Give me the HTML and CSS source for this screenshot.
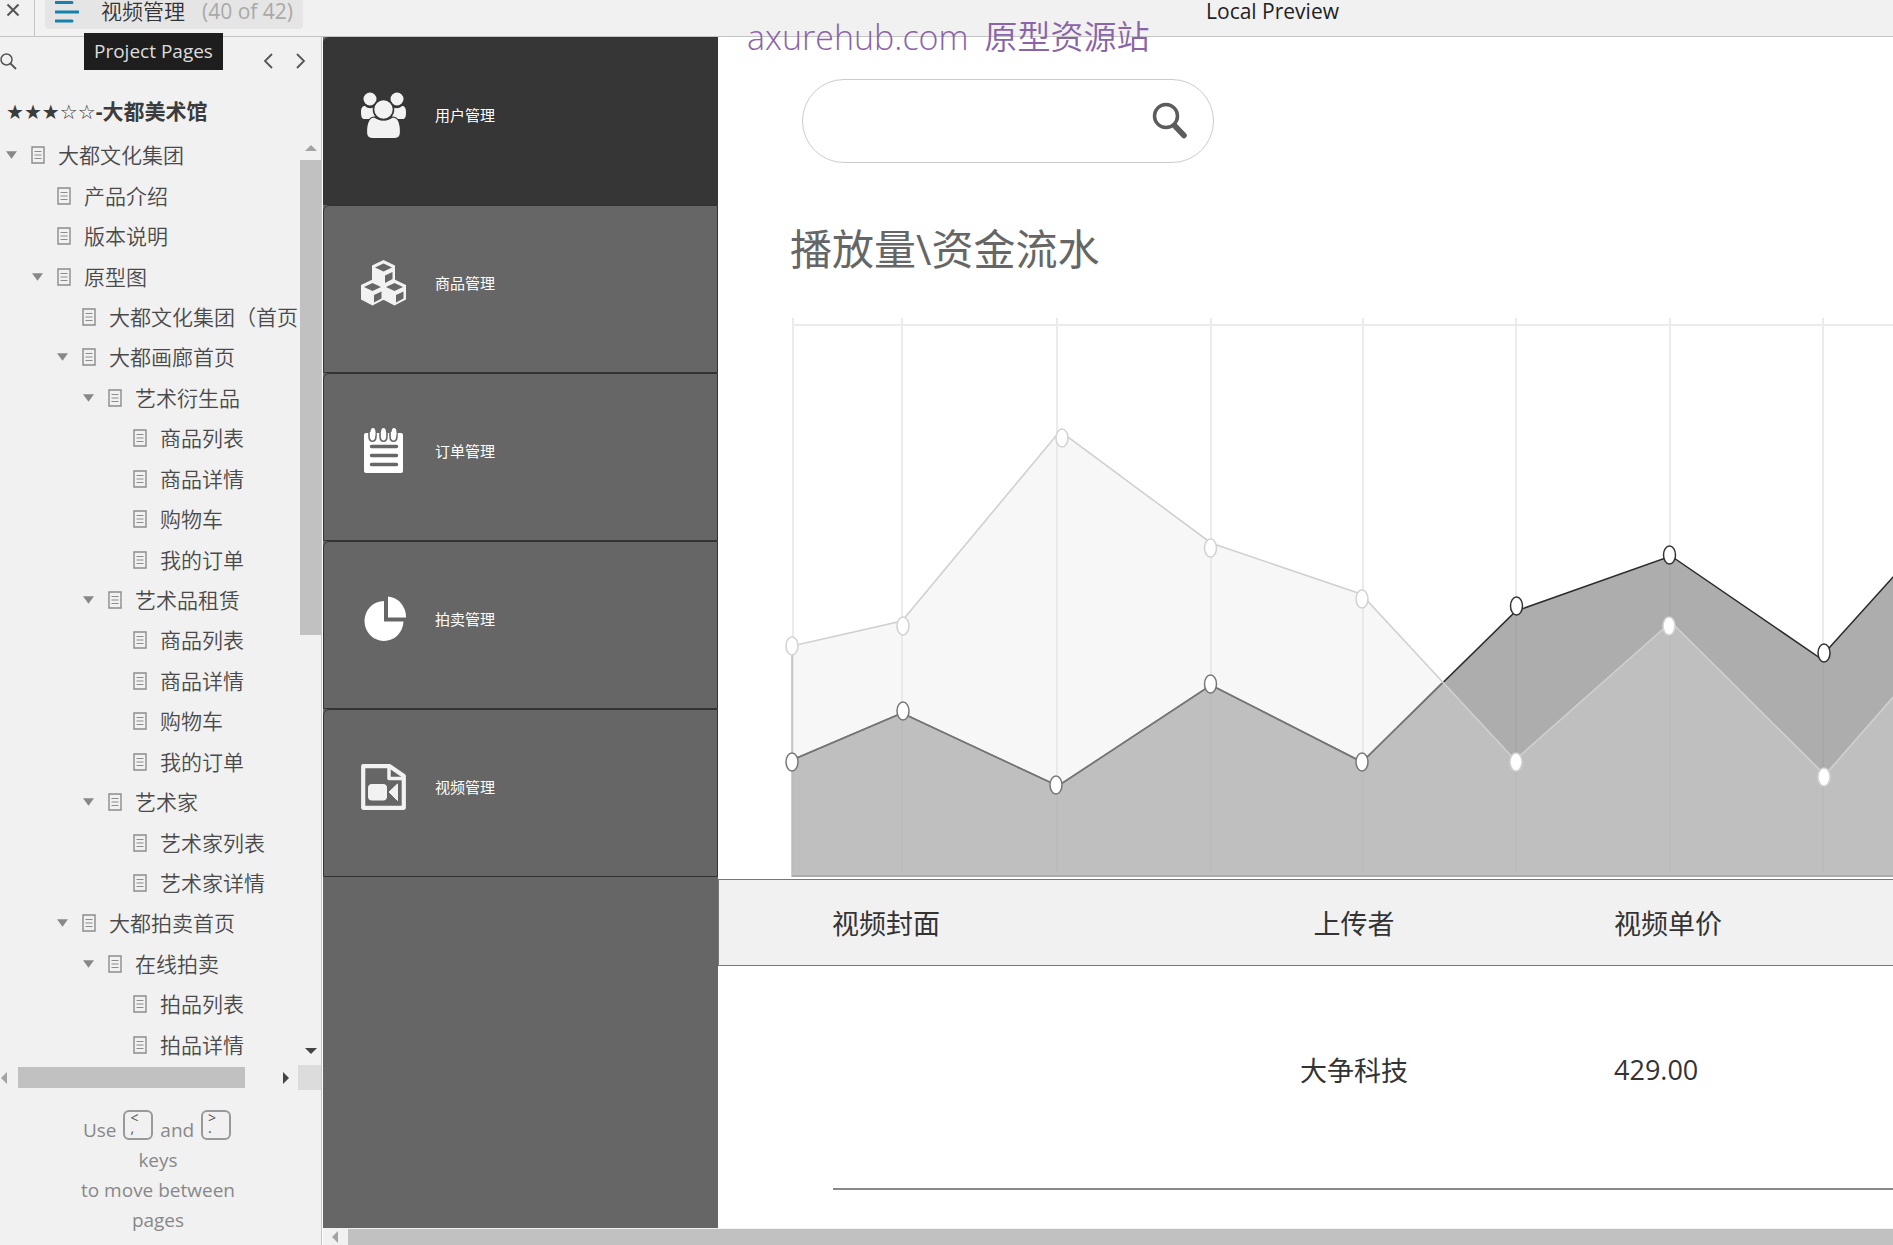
FILE: index.html
```html
<!DOCTYPE html>
<html lang="zh-CN">
<head>
<meta charset="utf-8">
<title>视频管理</title>
<link rel="stylesheet" href="styles.css">
</head>
<body>
<svg width="0" height="0" class="defs" aria-hidden="true">
  <symbol id="page" viewBox="0 0 14 18">
    <path d="M1 1h12v16H1z" fill="none" stroke="#8c8c8c" stroke-width="1.4"/>
    <path d="M3.5 5.5h7M3.5 9h7M3.5 12.500h7" stroke="#8c8c8c" stroke-width="1.2"/>
  </symbol>
  <symbol id="tri" viewBox="0 0 12 8"><path d="M0 0h12L6 8z" fill="currentColor"/></symbol>
</svg>

<header class="topbar">
  <button class="close" aria-label="Close"><svg width="14" height="14" viewBox="0 0 14 14"><path d="M1.500 1.500l11 11M12.500 1.500l-11 11" stroke="#555" stroke-width="2"/></svg></button>
  <button class="pages-toggle">
    <svg width="24" height="22" viewBox="0 0 24 22"><path d="M1 1.500h16M1 11h22M1 20h16" stroke="#1482ad" stroke-width="3" stroke-linecap="round"/></svg>
    <span class="page-name">视频管理</span>
    <span class="page-count">(40 of 42)</span>
  </button>
  <div class="preview">Local Preview</div>
  <div class="tooltip" role="tooltip">Project Pages</div>
  <div class="watermark"><span class="site">axurehub.com</span><span>原型资源站</span></div>
</header>

<div class="body">
  <aside class="sidebar">
    <div class="tools">
      <button aria-label="Search"><svg width="17" height="17" viewBox="0 0 17 17"><circle cx="6.500" cy="6.500" r="5.500" fill="none" stroke="#555" stroke-width="1.500"/><path d="M10.500 10.500l5.500 5.500" stroke="#555" stroke-width="1.800"/></svg></button>
      <span class="spacer"></span>
      <button aria-label="Previous"><svg width="10" height="16" viewBox="0 0 10 16"><path d="M9 1L2 8l7 7" fill="none" stroke="#555" stroke-width="1.800"/></svg></button>
      <button aria-label="Next"><svg width="10" height="16" viewBox="0 0 10 16"><path d="M1 1l7 7-7 7" fill="none" stroke="#555" stroke-width="1.800"/></svg></button>
    </div>
    <h1 class="project"><span class="stars">★★★☆☆</span>-大都美术馆</h1>
    <div class="tree-wrap">
      <ul class="tree">
        <li class="l0 open"><svg class="tri"><use href="#tri"/></svg><svg class="page"><use href="#page"/></svg><a href="#">大都文化集团</a></li>
        <li class="l1"><svg class="page"><use href="#page"/></svg><a href="#">产品介绍</a></li>
        <li class="l1"><svg class="page"><use href="#page"/></svg><a href="#">版本说明</a></li>
        <li class="l1 open"><svg class="tri"><use href="#tri"/></svg><svg class="page"><use href="#page"/></svg><a href="#">原型图</a></li>
        <li class="l2"><svg class="page"><use href="#page"/></svg><a href="#">大都文化集团（首页</a></li>
        <li class="l2 open"><svg class="tri"><use href="#tri"/></svg><svg class="page"><use href="#page"/></svg><a href="#">大都画廊首页</a></li>
        <li class="l3 open"><svg class="tri"><use href="#tri"/></svg><svg class="page"><use href="#page"/></svg><a href="#">艺术衍生品</a></li>
        <li class="l4"><svg class="page"><use href="#page"/></svg><a href="#">商品列表</a></li>
        <li class="l4"><svg class="page"><use href="#page"/></svg><a href="#">商品详情</a></li>
        <li class="l4"><svg class="page"><use href="#page"/></svg><a href="#">购物车</a></li>
        <li class="l4"><svg class="page"><use href="#page"/></svg><a href="#">我的订单</a></li>
        <li class="l3 open"><svg class="tri"><use href="#tri"/></svg><svg class="page"><use href="#page"/></svg><a href="#">艺术品租赁</a></li>
        <li class="l4"><svg class="page"><use href="#page"/></svg><a href="#">商品列表</a></li>
        <li class="l4"><svg class="page"><use href="#page"/></svg><a href="#">商品详情</a></li>
        <li class="l4"><svg class="page"><use href="#page"/></svg><a href="#">购物车</a></li>
        <li class="l4"><svg class="page"><use href="#page"/></svg><a href="#">我的订单</a></li>
        <li class="l3 open"><svg class="tri"><use href="#tri"/></svg><svg class="page"><use href="#page"/></svg><a href="#">艺术家</a></li>
        <li class="l4"><svg class="page"><use href="#page"/></svg><a href="#">艺术家列表</a></li>
        <li class="l4"><svg class="page"><use href="#page"/></svg><a href="#">艺术家详情</a></li>
        <li class="l2 open"><svg class="tri"><use href="#tri"/></svg><svg class="page"><use href="#page"/></svg><a href="#">大都拍卖首页</a></li>
        <li class="l3 open"><svg class="tri"><use href="#tri"/></svg><svg class="page"><use href="#page"/></svg><a href="#">在线拍卖</a></li>
        <li class="l4"><svg class="page"><use href="#page"/></svg><a href="#">拍品列表</a></li>
        <li class="l4"><svg class="page"><use href="#page"/></svg><a href="#">拍品详情</a></li>
      </ul>
      <div class="vbar">
        <svg width="12" height="8" viewBox="0 0 12 8"><path d="M0 7h12L6 1z" fill="#a3a3a3"/></svg>
        <div class="vtrack"><div class="vthumb"></div></div>
        <svg width="12" height="8" viewBox="0 0 12 8"><path d="M0 1h12L6 7z" fill="#444"/></svg>
      </div>
    </div>
    <div class="hbar">
      <svg width="8" height="12" viewBox="0 0 8 12"><path d="M7 0v12L1 6z" fill="#a3a3a3"/></svg>
      <div class="htrack"><div class="hthumb"></div></div>
      <svg width="8" height="12" viewBox="0 0 8 12"><path d="M1 0v12l6-6z" fill="#444"/></svg>
      <div class="corner"></div>
    </div>
    <p class="hint">Use <kbd>&lt;<br>,</kbd> and <kbd>&gt;<br>.</kbd><br>keys<br>to move between<br>pages</p>
  </aside>

  <div class="stage">
    <div class="frame">
      <nav class="nav">
        <a href="#" class="item active">
          <svg width="45" height="46" viewBox="0 0 45 46" fill="#f2f2f2" stroke="#363636">
            <g stroke="none"><path d="M0 20c0-5 2-6 4-6 3 3 8 3 10 0l2 9-5 4H3c-2 0-3-2-3-7z"/><path d="M45 20c0-5-2-6-4-6-3 3-8 3-10 0l-2 9 5 4h8c2 0 3-2 3-7z"/><circle cx="9" cy="7" r="6.500"/><circle cx="36" cy="7" r="6.500"/></g>
            <path d="M5.500 40c0-10 3-15 8-15 5 4 13 4 18 0 5 0 8 5 8 15 0 4-2 6.500-5.500 6.500H11C7.500 46.500 5.500 44 5.500 40z" stroke-width="1.200"/>
            <circle cx="22.500" cy="17.500" r="10" stroke-width="1.600"/>
          </svg><span>用户管理</span></a>
        <a href="#" class="item">
          <svg width="45" height="46" viewBox="0 0 45 46">
            <g id="cube"><path d="M22.500 0L34 5.500v14.500l-11.500 6L11 20V5.500z" fill="#f2f2f2"/><path d="M22.500 3.500L31 7.500l-8.500 4-8.500-4zM24 15.500l7.500-3.500v7L24 23z" fill="#666"/></g>
            <use href="#cube" x="-11" y="19.500"/><use href="#cube" x="11" y="19.500"/>
          </svg><span>商品管理</span></a>
        <a href="#" class="item">
          <svg width="45" height="46" viewBox="0 0 45 46">
            <rect x="3" y="5" width="39" height="40" rx="2" fill="#fff"/>
            <g fill="#fff" stroke="#666" stroke-width="1.600"><path d="M8 4v4c0 7 7 7 7 0V4M19 4v4c0 7 7 7 7 0V4M29 4v4c0 7 7 7 7 0V4"/></g>
            <g fill="#fff"><ellipse cx="12" cy="5" rx="2.500" ry="5"/><ellipse cx="22.500" cy="5" rx="2.500" ry="5"/><ellipse cx="33" cy="5" rx="2.500" ry="5"/></g>
            <path d="M10.500 18.500h25M10.500 27.500h25M10.500 36.500h25" stroke="#666" stroke-width="3.500" stroke-linecap="round"/>
          </svg><span>订单管理</span></a>
        <a href="#" class="item">
          <svg width="45" height="46" viewBox="0 0 45 46" fill="#fff">
            <path d="M23 5v20.500h19.500A19.500 20 0 1 1 23 5z"/><path d="M27 0.500A19.500 20.500 0 0 1 45 21.500H27z"/>
          </svg><span>拍卖管理</span></a>
        <a href="#" class="item">
          <svg width="45" height="46" viewBox="0 0 45 46" fill="none" stroke="#f2f2f2" stroke-width="4.200" stroke-linejoin="round">
            <path d="M2.200 2.200h26.500L42.800 12v31.800H2.200z"/><path d="M28 3v11.500h14" stroke-width="3.500"/>
            <rect x="7" y="20" width="19" height="16.500" rx="4" fill="#f2f2f2" stroke="none"/><path d="M28 28l8.500-8v16.500z" fill="#f2f2f2" stroke-width="1"/>
          </svg><span>视频管理</span></a>
      </nav>

      <main class="content">
        <form class="search">
          <input type="text" aria-label="搜索">
          <button type="button" aria-label="搜索"><svg width="36" height="38" viewBox="0 0 36 38"><circle cx="14" cy="14" r="11.500" fill="none" stroke="#5c5c5c" stroke-width="3.500"/><path d="M22.500 23.500l9.500 10" stroke="#5c5c5c" stroke-width="5.500" stroke-linecap="round"/></svg></button>
        </form>
        <h2 class="title">播放量\资金流水</h2>
        <svg class="chart" role="img" aria-label="播放量\资金流水">
          <g transform="translate(-782,-318)">
            <path d="M793 318V872M902 318V872M1057 318V872M1211 318V872M1363 318V872M1516 318V872M1670 318V872M1823 318V872M1978 318V872M792 325H2800" stroke="#ebebeb" stroke-width="2" fill="none"/>
            <path d="M792 877V760L902 713L1058 786L1211 685L1362 762L1516 611L1671 556L1820 658L1978 483L2800 483V877z" fill="#8a8a8a" fill-opacity=".7"/>
            <path d="M792 760L902 713L1058 786L1211 685L1362 762L1516 611L1671 556L1820 658L1978 483H2800" stroke="#2b2b2b" stroke-width="1.500" fill="none"/>
            <path d="M792 877V646L902 621L1060 431L1211 543L1361 594L1515 760L1671 622L1825 775L1978 600H2800V877z" fill="#e6e6e6" fill-opacity=".32"/>
            <path d="M792 646L902 621L1060 431L1211 543L1361 594L1515 760L1671 622L1825 775L1978 600H2800" stroke="#d0d0d0" stroke-width="1.600" fill="none"/>
            <path d="M792 646V877" stroke="#bcbcbc" stroke-width="1.500"/>
            <path d="M792 876H2800" stroke="#ababab" stroke-width="2"/>
            <path d="M792 760L902 713L1058 786L1211 685L1362 762L1442 683" stroke="#777" stroke-width="1.500" fill="none"/>
            <g fill="#fff" stroke="#d3d3d3" stroke-width="1.600">
              <ellipse cx="792" cy="646" rx="6" ry="9"/><ellipse cx="903" cy="626" rx="6" ry="9"/><ellipse cx="1062" cy="438" rx="6" ry="9"/><ellipse cx="1210.500" cy="548" rx="6" ry="9"/><ellipse cx="1362" cy="599" rx="6" ry="9"/>
              <ellipse cx="1516" cy="762" rx="6" ry="9"/><ellipse cx="1669" cy="626" rx="6" ry="9"/><ellipse cx="1824" cy="777" rx="6" ry="9"/>
            </g>
            <g fill="#fff" stroke="#777" stroke-width="1.500">
              <ellipse cx="792" cy="762" rx="6" ry="9"/><ellipse cx="903" cy="711" rx="6" ry="9"/><ellipse cx="1056" cy="785" rx="6" ry="9"/><ellipse cx="1210.500" cy="684" rx="6" ry="9"/><ellipse cx="1362" cy="762" rx="6" ry="9"/>
            </g>
            <g fill="#fff" stroke="#333" stroke-width="1.500">
              <ellipse cx="1516.500" cy="606" rx="6" ry="9"/><ellipse cx="1669.500" cy="555" rx="6" ry="9"/><ellipse cx="1824" cy="653" rx="6" ry="9"/>
            </g>
          </g>
        </svg>
        <table class="videos">
          <colgroup><col class="c-cover"><col class="c-owner"><col></colgroup>
          <thead><tr><th>视频封面</th><th class="owner">上传者</th><th>视频单价</th></tr></thead>
          <tbody><tr><td></td><td class="owner">大争科技</td><td>429.00</td></tr></tbody>
        </table>
        <hr class="rule">
      </main>
    </div>
    <div class="stage-bar">
      <svg width="8" height="12" viewBox="0 0 8 12"><path d="M7 0v12L1 6z" fill="#a3a3a3"/></svg>
      <div class="stage-thumb"></div>
    </div>
  </div>
</div>
</body>
</html>
```
FILE: styles.css
```css
* { box-sizing: border-box; }
html, body { height: 100%; }
body {
  margin: 0;
  display: flex;
  flex-direction: column;
  overflow: hidden;
  background: #fff;
  color: #333;
  font-family: "Open Sans", "Noto Sans CJK SC", sans-serif;
}
button { border: 0; padding: 0; background: none; font: inherit; color: inherit; display: flex; align-items: center; }
a { color: inherit; text-decoration: none; }
svg { display: block; flex: none; }
.defs { position: absolute; }

.topbar {
  position: relative;
  flex: none;
  display: flex;
  align-items: flex-start;
  height: 37px;
  background: #f1f1f1;
  border-bottom: 1px solid #c4c4c4;
}
.close { width: 35px; height: 36px; padding: 3px 6px; align-items: flex-start; border-right: 1px solid #c4c4c4; }
.pages-toggle {
  height: 29px;
  margin-left: 10px;
  padding: 0 10px 6px;
  background: #e5e5e5;
  border-radius: 0 0 4px 4px;
  font-size: 21px;
  line-height: 23px;
}
.page-name { margin-left: 22px; font-weight: 350; }
.page-count { margin-left: 17px; color: #a9a9a9; }
.preview { flex: 1; padding-left: 903px; font-size: 21px; line-height: 22px; color: #222; white-space: nowrap; }
.tooltip {
  position: absolute;
  z-index: 2;
  left: 84px;
  top: 33px;
  padding: 0 10px;
  background: #1e1e1e;
  color: #ddd;
  font-size: 19px;
  line-height: 37px;
}
.watermark {
  position: absolute;
  z-index: 2;
  left: 747px;
  top: 17px;
  display: flex;
  gap: 16px;
  align-items: center;
  color: #8a64a8;
  font-size: 33px;
  line-height: 40px;
  font-weight: 350;
}
.site { font-size: 34px; }

.body { flex: 1; min-height: 0; display: flex; }

.sidebar {
  flex: none;
  width: 322px;
  display: flex;
  flex-direction: column;
  background: #f1f1f1;
  border-right: 1px solid #c4c4c4;
}
.tools { display: flex; align-items: center; gap: 23px; height: 48px; padding-right: 15px; }
.spacer { flex: 1; }
.project { margin: 0; height: 50px; padding-left: 6px; font-size: 21px; line-height: 52px; font-weight: 700; white-space: nowrap; color: #3c3c3c; }
.stars { font-family: "DejaVu Sans", sans-serif; font-size: 20px; font-weight: 400; }
.tree-wrap { flex: 1; min-height: 0; display: flex; }
.tree {
  flex: 1;
  min-width: 0;
  margin: 0;
  padding: 0;
  list-style: none;
  display: grid;
  grid-auto-rows: 1fr;
  overflow: hidden;
  font-size: 21px;
  font-weight: 350;
  color: #4a4a4a;
}
.tree li { display: flex; align-items: center; min-height: 0; line-height: 30px; white-space: nowrap; }
.tree .l0.open { padding-left: 6px; }
.tree .l1 { padding-left: 57px; }
.tree .l1.open { padding-left: 32px; }
.tree .l2 { padding-left: 82px; }
.tree .l2.open { padding-left: 57px; }
.tree .l3.open { padding-left: 83px; }
.tree .l4 { padding-left: 133px; }
.tri { width: 11px; height: 8px; margin-right: 14px; color: #888; }
.page { width: 14px; height: 18px; margin-right: 13px; }
.vbar { flex: none; width: 21px; display: flex; flex-direction: column; align-items: center; gap: 8px; padding: 9px 0 10px; }
.vtrack { flex: 1; width: 100%; }
.vthumb { height: 54%; background: #c1c1c1; }
.hbar { flex: none; display: flex; align-items: center; height: 25px; }
.htrack { flex: 1; padding: 0 37px 0 10px; }
.hthumb { height: 21px; background: #c1c1c1; }
.corner { width: 23px; height: 25px; margin-left: 8px; background: #dcdcdc; }
.hint { flex: none; margin: 0; height: 155px; padding: 20px 5px 0 0; text-align: center; font-size: 19px; line-height: 30px; color: #888; }
.hint kbd {
  display: inline-block;
  width: 30px;
  height: 30px;
  margin: 0 2px;
  padding: 1px 5px;
  border: 2px solid #999;
  border-radius: 6px;
  text-align: left;
  vertical-align: -3px;
  font: 14px/10px "Open Sans", sans-serif;
  color: #555;
  overflow: hidden;
}

.stage { flex: 1; min-width: 0; display: flex; flex-direction: column; padding-left: 1px; }
.frame { flex: 1; min-height: 0; display: flex; overflow: hidden; }
.nav { flex: none; width: 395px; background: #666; }
.item {
  display: flex;
  align-items: center;
  gap: 29px;
  height: 168px;
  padding: 0 37px 13px;
  border: 1px solid #333;
  border-radius: 6px 0 0 0;
  color: #fff;
  font-size: 15px;
}
.item.active { background: #363636; }
.content { flex: 1; min-width: 0; display: flex; flex-direction: column; }
.search {
  display: flex;
  align-items: center;
  width: 412px;
  height: 84px;
  margin: 42px 0 0 84px;
  padding: 0 25px;
  border: 1px solid #ccc;
  border-radius: 42px;
}
.search input { flex: 1; min-width: 0; height: 60px; border: 0; outline: 0; background: none; font: 24px "Open Sans", "Noto Sans CJK SC", sans-serif; }
.title { margin: 51px 0 0 72px; font-size: 42px; line-height: 70px; font-weight: 400; color: #666; }
.chart { height: 559px; width: auto; margin: 34px 0 0 64px; }
.videos { margin-top: 2px; width: 100%; table-layout: fixed; border-collapse: separate; border-spacing: 0; font-size: 27px; }
.c-cover { width: 516px; }
.c-owner { width: 240px; }
.videos th, .videos td { height: 222px; padding: 0 0 16px 140px; text-align: left; font-weight: 400; }
.videos th { height: 87px; padding-bottom: 0; background: #f1f1f1; border: solid #777; border-width: 1px 0; }
.videos th:first-child { padding-left: 113px; border-left-width: 1px; }
.videos .owner { padding-left: 0; text-align: center; }
.rule { width: auto; height: 2px; margin: 0 0 0 115px; border: 0; background: #888; }
.stage-bar { flex: none; display: flex; align-items: center; gap: 9px; height: 17px; padding-left: 8px; background: #f1f1f1; }
.stage-thumb { flex: 1; height: 16px; background: #c1c1c1; }
```
